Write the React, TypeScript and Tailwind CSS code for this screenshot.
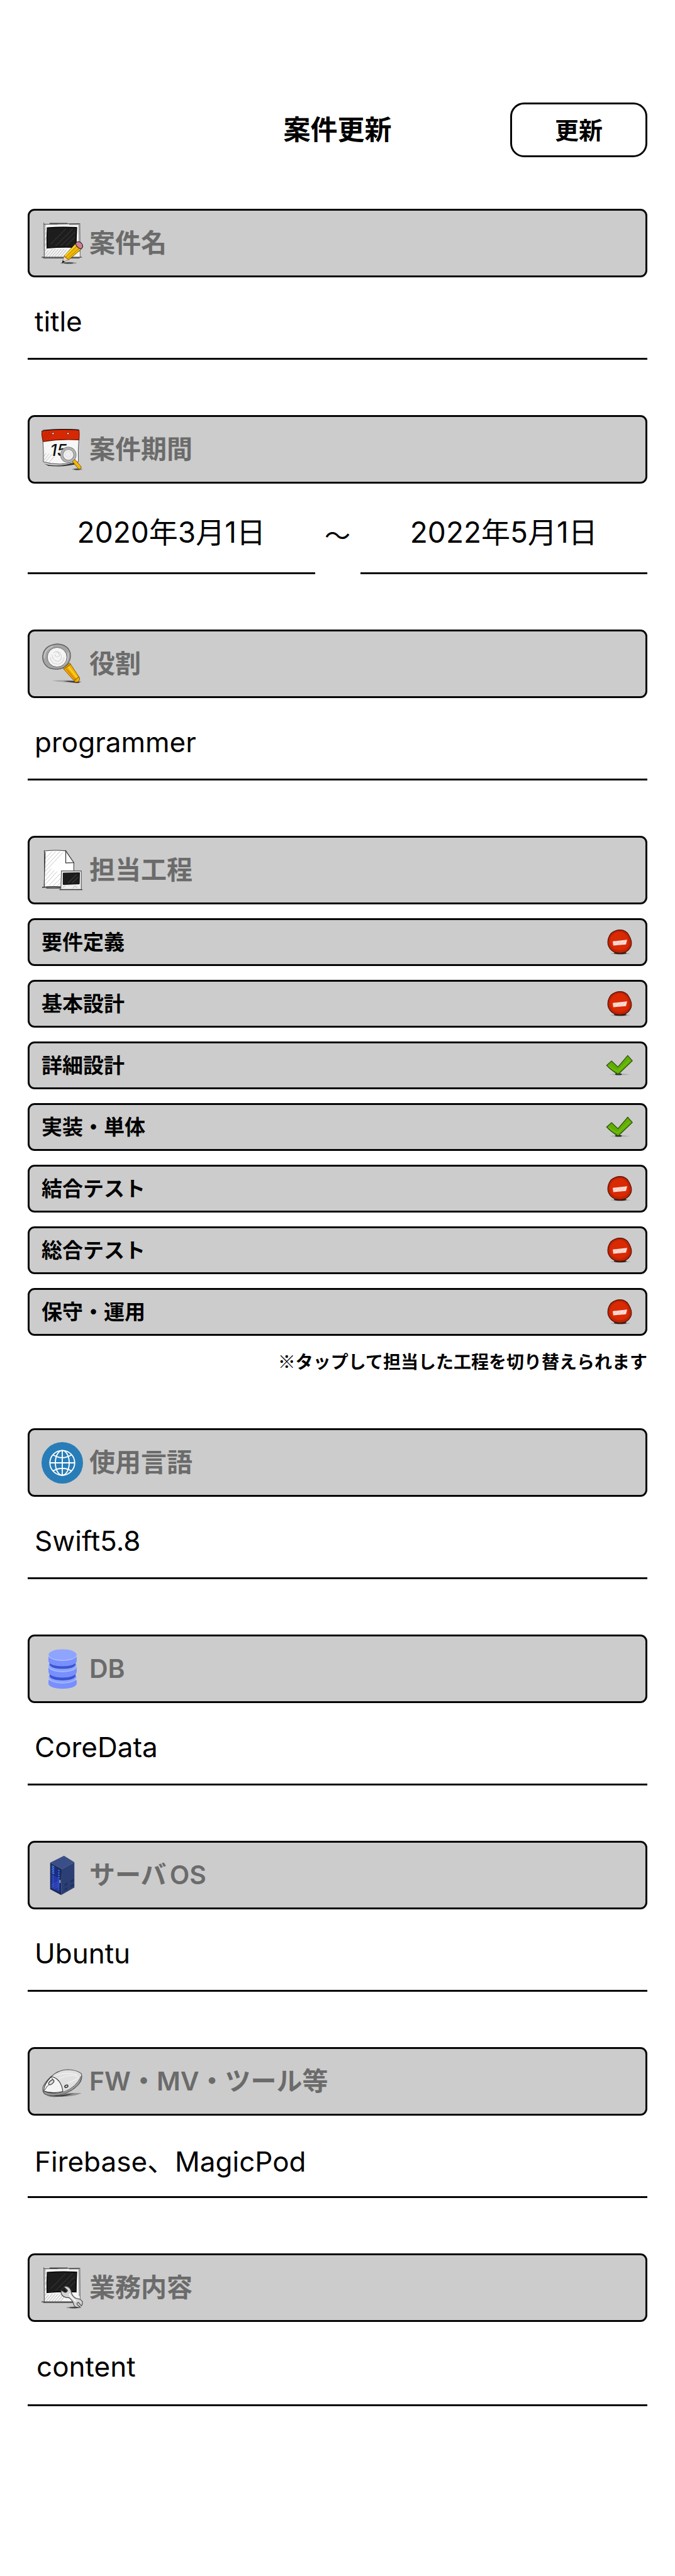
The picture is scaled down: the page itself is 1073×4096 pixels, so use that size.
import { useState, type ReactNode } from "react";

function Shadow({ cx, cy, rx }: { cx: number; cy: number; rx: number }) {
  return (
    <>
      <ellipse cx={cx} cy={cy} rx={rx} ry="1.8" fill="#000" opacity="0.25" />
      <ellipse cx={cx} cy={cy} rx={rx * 0.6} ry="1.1" fill="#000" opacity="0.6" />
    </>
  );
}

function Polaroid() {
  return (
    <>
      <path d="M4 1 L66 1 L67 60 L4 61 Z" fill="#f4f4f4" />
      <path d="M4 0 L4.500 61 M5.500 3 L5 60 M66.500 1 L67 60 M65 4 L65.500 50" stroke="#555" strokeWidth="0.9" fill="none" />
      <path d="M4 2.500 H28 M14 1.300 H45 M24 2.300 L66 1.800 M48 3 H66" stroke="#222" strokeWidth="1.300" fill="none" opacity="0.8" />
      <path d="M0 60 H70 M3 61.500 H66" stroke="#333" strokeWidth="1.400" opacity="0.75" />
      <path d="M5 57 L12 48 M8 59 L19 46 M13 59 L24 46 M18 59 L29 46 M23 59 L34 46 M28 59 L39 46 M33 59 L43 47 M5 50 L9 45 M5 8 L8 4 M5 14 L8 9 M5 22 L8 17 M5 32 L8 26 M5 42 L8 36" stroke="#999" strokeWidth="0.8" fill="none" />
      <path d="M10 9 Q35 7 61 8.500 Q60 26 60 43 Q34 42 9.500 44 Q9 25 10 9 Z" fill="#1d1d1d" stroke="#000" strokeWidth="1.500" />
      <path d="M24 41 L54 11 M33 41 L58 16 M16 37 L42 11 M43 40 L58 25" stroke="#3a3a3a" strokeWidth="1.500" opacity="0.7" />
    </>
  );
}

function NoteIcon() {
  return (
    <>
      <Polaroid />
      <Shadow cx={47} cy={70} rx={14} />
      <path d="M36 69 L39 58 L47 64 Z" fill="#ead3b8" stroke="#555" strokeWidth="0.6" />
      <path d="M35.500 70.500 L36.800 65.500 L40.500 68 Z" fill="#111" />
      <path d="M39 58 L59 36.500 L69 46 L47 64.500 Z" fill="#f2bb05" stroke="#5d4300" strokeWidth="0.9" />
      <path d="M42 60 L62 40 M45 63 L66 43.500" stroke="#a87900" strokeWidth="1" />
      <path d="M41 57.500 L60 38" stroke="#ffe04c" strokeWidth="1.600" />
      <path d="M59 37 Q60 33 65 33 Q71 35 71.500 41 Q71 45 67.500 45.500 Q61 43 59 37 Z" fill="#cf7d97" stroke="#222" strokeWidth="1.200" />
    </>
  );
}

function CalendarIcon() {
  return (
    <>
      <path d="M4 60 Q25 68 60 58 L63 60 Q40 67 12 64 Z" fill="#000" opacity="0.8" />
      <path d="M2 18 L65 16 Q63 36 64 57 Q30 65 3 57 Q4 40 2 18 Z" fill="#f7f7f7" stroke="#444" strokeWidth="1" />
      <path d="M0.500 4 Q30 -1 65 2 Q66 10 65 19 Q33 17 3 22 Q0 13 0.500 4 Z" fill="#d62803" stroke="#6d1702" strokeWidth="1.200" />
      <path d="M2 2.500 Q30 -0.500 64 1.500" stroke="#111" strokeWidth="1.200" fill="none" />
      <path d="M3 16 L9 5 M6 19 L14 5 M11 18 L17 8" stroke="#a51d00" strokeWidth="0.8" />
      <circle cx="20" cy="8" r="1.800" fill="#f2f2f2" stroke="#5a1200" strokeWidth="0.8" />
      <circle cx="46" cy="8" r="1.800" fill="#f2f2f2" stroke="#5a1200" strokeWidth="0.8" />
      <path d="M4 55 L13 43 M7 57 L18 44 M12 59 L22 48 M4 48 L8 42" stroke="#aaa" strokeWidth="0.8" />
      <text x="15" y="47" fontFamily="Inter, sans-serif" fontSize="28" fontWeight="500" fontStyle="italic" fill="#111">15</text>
      <Shadow cx={62} cy={70} rx={9} />
      <path d="M53 56 L58 53 L69 66 Q69 70 65 70 Z" fill="#f4b805" stroke="#755000" strokeWidth="1" />
      <circle cx="46.500" cy="45" r="11.500" fill="#eee" stroke="#6f6f6f" strokeWidth="5" />
      <circle cx="46.500" cy="45" r="11.500" fill="none" stroke="#b4b4b4" strokeWidth="3.400" />
      <circle cx="46" cy="44" r="5" fill="none" stroke="#ddd" strokeWidth="1" />
    </>
  );
}

function MagnifierIcon() {
  return (
    <>
      <path d="M18 65 Q40 62 70 66 L64 69 Q40 68 18 65 Z" fill="#000" opacity="0.2" />
      <path d="M38 65.500 Q54 64 68 67 L62 69 Z" fill="#000" opacity="0.65" />
      <path d="M37 43 L49 34 L66 60 Q67 67 59 67.500 Z" fill="#f3b404" stroke="#7a5000" strokeWidth="1" />
      <path d="M43 44 L60 65" stroke="#e08c00" strokeWidth="3" />
      <path d="M47 41 L62 60" stroke="#ffd42e" strokeWidth="2" />
      <path d="M38.500 45 L50.500 36 M57 64 L65.500 57.500" stroke="#946300" strokeWidth="1.200" />
      <path d="M27 1 Q46 2 50 17 Q52 31 41 40 Q30 48 14 43 Q1 36 2 21 Q5 3 27 1 Z" fill="#a5a5a5" stroke="#555" strokeWidth="1.300" />
      <path d="M5 26 Q5 9 20 5 M46 16 Q48 30 38 37" fill="none" stroke="#c6c6c6" strokeWidth="2" />
      <circle cx="27" cy="24" r="17" fill="#f4f4f4" stroke="#606060" strokeWidth="1" />
      <path d="M15 24 Q17 37 30 36 Q39 33 39 24 M18 20 Q20 32 30 31 Q36 28 34 20 Q29 11 21 16 M23 19 Q25 26 31 22 Q31 16 26 15" fill="none" stroke="#d3d3d3" strokeWidth="1.200" />
    </>
  );
}

function DocumentIcon() {
  return (
    <>
      <path d="M5 2 Q24 0 42 2 L56 23 L57 65 L5 65 Z" fill="#fff" />
      <path d="M6 16 L18 3 M6 23 L25 3 M6 31 L32 3 M6 38 L37 5 M6 46 L17 33 M6 54 L22 36 M6 61 L27 38 M13 62 L32 42 M20 63 L33 50 M26 64 L34 56" stroke="#bbb" strokeWidth="0.9" />
      <path d="M5 1 L5 66 M6.500 4 L4.500 64 M4 2.500 Q24 0 42 2 M56 22 L56 37" fill="none" stroke="#444" strokeWidth="1.200" />
      <path d="M42 2 L42 23 L56 22.500 Z" fill="#fafafa" stroke="#333" strokeWidth="1.300" />
      <path d="M1 65.500 Q20 63 36 65 M8 66.500 H34" fill="none" stroke="#333" strokeWidth="1.600" />
      <path d="M34.500 37 L69 37 L69 69 L33.500 69 Z" fill="#eee" stroke="#555" strokeWidth="1.200" />
      <path d="M31 69.500 H71" stroke="#333" strokeWidth="1.300" />
      <path d="M37.500 40.500 L66 40 L65.500 59.500 L37.500 60.500 Z" fill="#1c1c1c" stroke="#000" />
      <path d="M46 58 L61 43 M53 58 L64 47" stroke="#414141" strokeWidth="1.200" />
      <path d="M37 66 L41 62 M54 67 L58 63 L62 66" stroke="#aaa" strokeWidth="1" fill="none" />
    </>
  );
}

function GlobeIcon() {
  return (
    <>
      <circle cx="36" cy="36" r="36" fill="#287db8" />
      <g fill="none" stroke="#fff" strokeWidth="2">
        <circle cx="36" cy="36" r="21.500" />
        <ellipse cx="36" cy="36" rx="12" ry="21.500" />
        <path d="M36 14.500 V57.500 M14.500 36 H57.500 M20 22 Q36 32 52 22 M20 50 Q36 41 52 50" />
      </g>
    </>
  );
}

function DatabaseIcon() {
  return (
    <>
      <path d="M12 55 V61 C13 73 60 73 61 61 V55 Z" fill="#788fff" />
      <path d="M12 50 L14 46 H59 L61 50 C61 63 12 63 12 50 Z" fill="#8fa4ff" />
      <path d="M12 50 C13 63.500 60 63.500 61 50" fill="none" stroke="#b6c4ff" strokeWidth="1.200" />
      <path d="M14 40 H59 V48 C57 58 16 58 14 48 Z" fill="#3a55cf" />
      <path d="M12 30 V41 C13 54 60 54 61 41 V30 Z" fill="#788fff" />
      <path d="M12 30 L14 26 H59 L61 30 C61 44 12 44 12 30 Z" fill="#8fa4ff" />
      <path d="M12 30 C13 44 60 44 61 30" fill="none" stroke="#b6c4ff" strokeWidth="1.200" />
      <path d="M14 20 H59 V28 C57 38 16 38 14 28 Z" fill="#3a55cf" />
      <path d="M12 11 V22 C13 34 60 34 61 22 V11 Z" fill="#788fff" />
      <ellipse cx="36.500" cy="11.500" rx="24.500" ry="10" fill="#8fa4ff" />
      <path d="M12 11.500 C13 24 60 24 61 11.500" fill="none" stroke="#b6c4ff" strokeWidth="1.200" />
    </>
  );
}

function ServerIcon() {
  return (
    <>
      <path d="M39 2 L57 13 L35 25 L15 14 Z" fill="#3a4f88" />
      <path d="M57 13 V57 L34 70 L35 25 Z" fill="#2c3f75" />
      <path d="M15 14 L35 25 L34 70 L15 60 Z" fill="#1b2a57" />
      <path d="M17 18 L32 27 L31.500 65 L17 58 Z" fill="#2439a5" />
      <path d="M17 20 L32 29 M17 23 L32 32 M17 26 L32 35 M17 29 L32 38 M17 32 L32 41" stroke="#101f64" strokeWidth="1.200" />
      <path d="M18 19 L22 21.500 M18 22 L22 24.500 M18 25 L22 27.500 M18 28 L22 30.500 M18 31 L22 33.500 M29 27 L31 28.500 M29 31 L31 32.500 M29 35 L31 36.500 M29 39 L31 40.500" stroke="#5aa1ff" strokeWidth="1.300" />
      <path d="M20 36 V57 M29 42 V62 M17 53 L29 47 M17 57 L31 50 M21 59 L31 54" stroke="#4b68ee" strokeWidth="0.9" opacity="0.8" />
      <path d="M32 44 V49" stroke="#e6ecff" strokeWidth="1.300" />
      <path d="M40 51 L45 48 V52 L40 55 Z M50 45 L56 42 V46 L50 49 Z M40 59 L45 56 V60 L40 63 Z M50 53 L56 50 V54 L50 57 Z" fill="#223260" />
    </>
  );
}

function MouseIcon() {
  return (
    <>
      <path d="M8 60 Q40 54 70 56 Q52 63 30 62 Q16 64 8 60 Z" fill="#000" opacity="0.3" />
      <path d="M12 61 Q36 60 56 56 Q42 62 28 62 Z" fill="#000" opacity="0.6" />
      <path d="M17 27 Q28 16 45 15 Q60 15 69 22 Q72 32 64 41 Q52 54 34 58 Q14 62 5 57 Q0 51 3 44 Q8 34 17 27 Z" fill="#e0e0e0" stroke="#555" strokeWidth="1.200" />
      <path d="M3 53 Q20 59 38 54 Q60 46 69 26 Q69 36 62 43 Q44 60 20 60 Q4 60 3 53 Z" fill="#9b9b9b" stroke="#4c4c4c" strokeWidth="0.8" />
      <path d="M17 27 Q34 31 37 53 Q19 58 4 52 Q3 42 17 27 Z" fill="#f4f4f4" stroke="#333" strokeWidth="1.200" />
      <path d="M16 28 Q23 33 17 38 Q9 43 5 51" fill="none" stroke="#333" strokeWidth="1" />
      <ellipse cx="17" cy="37" rx="5.500" ry="2.800" transform="rotate(-42 17 37)" fill="#ddd" stroke="#333" strokeWidth="1.300" />
      <ellipse cx="43" cy="44" rx="3" ry="2" transform="rotate(-25 43 44)" fill="#ccc" stroke="#222" strokeWidth="1.400" />
      <path d="M25 26 Q40 18 62 24 M30 31 Q46 22 64 27 M45 38 Q56 35 64 29" fill="none" stroke="#f0f0f0" strokeWidth="1.600" />
    </>
  );
}

function WrenchIcon() {
  return (
    <>
      <Polaroid />
      <Shadow cx={56} cy={70} rx={13} />
      <path d="M42 33 Q51 34 52 45 Q54 51 60 54 Q69 55 71 60 Q71 66 69 67 L64 61 Q60 62 62 65 L67 69 Q58 71 56 65 Q55 59 48 53 Q36 53 34 45 L34 40 L41 44 Q45 43 45 40 L39 34 Z" fill="#d3d3d3" stroke="#444" strokeWidth="1.200" />
      <path d="M48 46 Q51 53 60 59" fill="none" stroke="#f5f5f5" strokeWidth="2.500" />
    </>
  );
}

function StopMark() {
  return (
    <svg viewBox="0 0 48 48" className="size-11 shrink-0" aria-hidden="true">
      <ellipse cx="25" cy="44" rx="17" ry="1.500" fill="#000" opacity="0.15" />
      <ellipse cx="25" cy="43" rx="11" ry="2" fill="#000" opacity="0.8" />
      <path d="M25 3 Q35 3 40 12 Q46 22 44 30 Q39 43 25 43 Q9 43 4 29 Q2 18 9 9 Q16 3 25 3 Z" fill="#c32303" stroke="#5d1606" strokeWidth="1.400" />
      <path d="M25 6 Q34 7 38 17 Q43 30 35 35 Q24 42 13 35 Q4 26 9 15 Q15 6 25 6 Z" fill="#da2a03" />
      <path d="M12 22.500 L37 20 L35 28 L13 30 Z" fill="#fbdcd5" />
      <path d="M14 28 L20 23 M20 29 L26 23 M27 28 L33 22" stroke="#f0a99a" strokeWidth="0.8" />
    </svg>
  );
}

function CheckMark() {
  return (
    <svg viewBox="0 0 48 48" className="size-11 shrink-0" aria-hidden="true">
      <path d="M6 40 Q22 36 42 40 Q22 42 6 40 Z" fill="#000" opacity="0.15" />
      <ellipse cx="22" cy="39.500" rx="6" ry="1.500" fill="#000" opacity="0.75" />
      <path d="M1.500 24 L10 16.500 L21 27 L38 7 L46 16 L21.500 39.500 Q10 33 1.500 24 Z" fill="#5fae04" stroke="#2c4d0a" strokeWidth="1.300" />
      <path d="M5 24 Q12 32 21 34 L41 15" fill="none" stroke="#6cbd0c" strokeWidth="2.500" />
    </svg>
  );
}

function SectionHeader({ icon, title, htmlFor }: { icon: ReactNode; title: string; htmlFor?: string }) {
  return (
    <div className="flex h-[109px] items-center gap-2.5 rounded-[11px] border-3 border-[#040506] bg-[#ccc] px-[19px]">
      <svg viewBox="0 0 72 72" className="size-[66px] shrink-0" aria-hidden="true">
        {icon}
      </svg>
      <h2 className="text-[41px] leading-none font-semibold text-[#6b6b6b]">
        {htmlFor ? <label htmlFor={htmlFor}>{title}</label> : title}
      </h2>
    </div>
  );
}

function TextSection({ id, icon, title, value }: { id: string; icon: ReactNode; title: string; value: string }) {
  return (
    <section>
      <SectionHeader icon={icon} title={title} htmlFor={id} />
      <input
        id={id}
        type="text"
        defaultValue={value}
        className="block h-[131px] w-full border-b-3 border-[#040506] px-[11px] pt-3 text-[44px] outline-none"
      />
    </section>
  );
}

const initialProcesses = [
  { name: "要件定義", done: false },
  { name: "基本設計", done: false },
  { name: "詳細設計", done: true },
  { name: "実装・単体", done: true },
  { name: "結合テスト", done: false },
  { name: "総合テスト", done: false },
  { name: "保守・運用", done: false },
];

const dateClass =
  "h-[144px] w-full min-w-0 flex-1 border-b-3 border-[#040506] pt-1.5 text-center text-[46px] outline-none [text-autospace:no-autospace]";

export default function App() {
  const [processes, setProcesses] = useState(initialProcesses);
  const toggle = (index: number) =>
    setProcesses(processes.map((p, i) => (i === index ? { ...p, done: !p.done } : p)));

  return (
    <main
      lang="ja"
      className="bg-white px-11 pt-[163px] pb-[270px] font-['Inter','Noto_Sans_CJK_JP',sans-serif] text-black [text-autospace:normal]"
    >
      <header className="mb-[82px] grid grid-cols-[1fr_auto_1fr] items-center">
        <h1 className="col-start-2 text-[43px] leading-none font-semibold">案件更新</h1>
        <button
          type="button"
          className="h-[87px] w-[218px] justify-self-end rounded-[22px] border-3 border-[#040506] text-[38px] leading-none font-semibold"
        >
          更新
        </button>
      </header>

      <div className="flex flex-col gap-[88px]">
        <TextSection id="title" icon={<NoteIcon />} title="案件名" value="title" />

        <section>
          <SectionHeader icon={<CalendarIcon />} title="案件期間" />
          <div className="flex items-center">
            <input type="text" aria-label="開始日" defaultValue="2020年3月1日" className={dateClass} />
            <span className="w-[72px] pt-6 text-center text-[41px]">〜</span>
            <input type="text" aria-label="終了日" defaultValue="2022年5月1日" className={dateClass} />
          </div>
        </section>

        <TextSection id="role" icon={<MagnifierIcon />} title="役割" value="programmer" />

        <section>
          <SectionHeader icon={<DocumentIcon />} title="担当工程" />
          <ul className="mt-[22px] flex flex-col gap-[22px]">
            {processes.map((p, i) => (
              <li key={p.name}>
                <button
                  type="button"
                  aria-pressed={p.done}
                  onClick={() => toggle(i)}
                  className="flex h-[76px] w-full items-center justify-between rounded-[11px] border-3 border-[#040506] bg-[#ccc] px-[19px] text-[33px] leading-none font-semibold"
                >
                  {p.name}
                  {p.done ? <CheckMark /> : <StopMark />}
                </button>
              </li>
            ))}
          </ul>
          <p className="mt-[22px] text-right font-['Noto_Sans_CJK_JP',sans-serif] text-[28px] leading-[37px] font-semibold">
            ※タップして担当した工程を切り替えられます
          </p>
        </section>

        <TextSection id="language" icon={<GlobeIcon />} title="使用言語" value="Swift5.8" />
        <TextSection id="db" icon={<DatabaseIcon />} title="DB" value="CoreData" />
        <TextSection id="server" icon={<ServerIcon />} title="サーバOS" value="Ubuntu" />
        <TextSection id="tools" icon={<MouseIcon />} title="FW・MV・ツール等" value="Firebase、MagicPod" />

        <section>
          <SectionHeader icon={<WrenchIcon />} title="業務内容" htmlFor="content" />
          <textarea
            id="content"
            rows={1}
            defaultValue="content"
            className="block h-[134px] w-full resize-none border-b-3 border-[#040506] px-3.5 pt-[41px] text-[44px] leading-[60px] outline-none"
          />
        </section>
      </div>
    </main>
  );
}
